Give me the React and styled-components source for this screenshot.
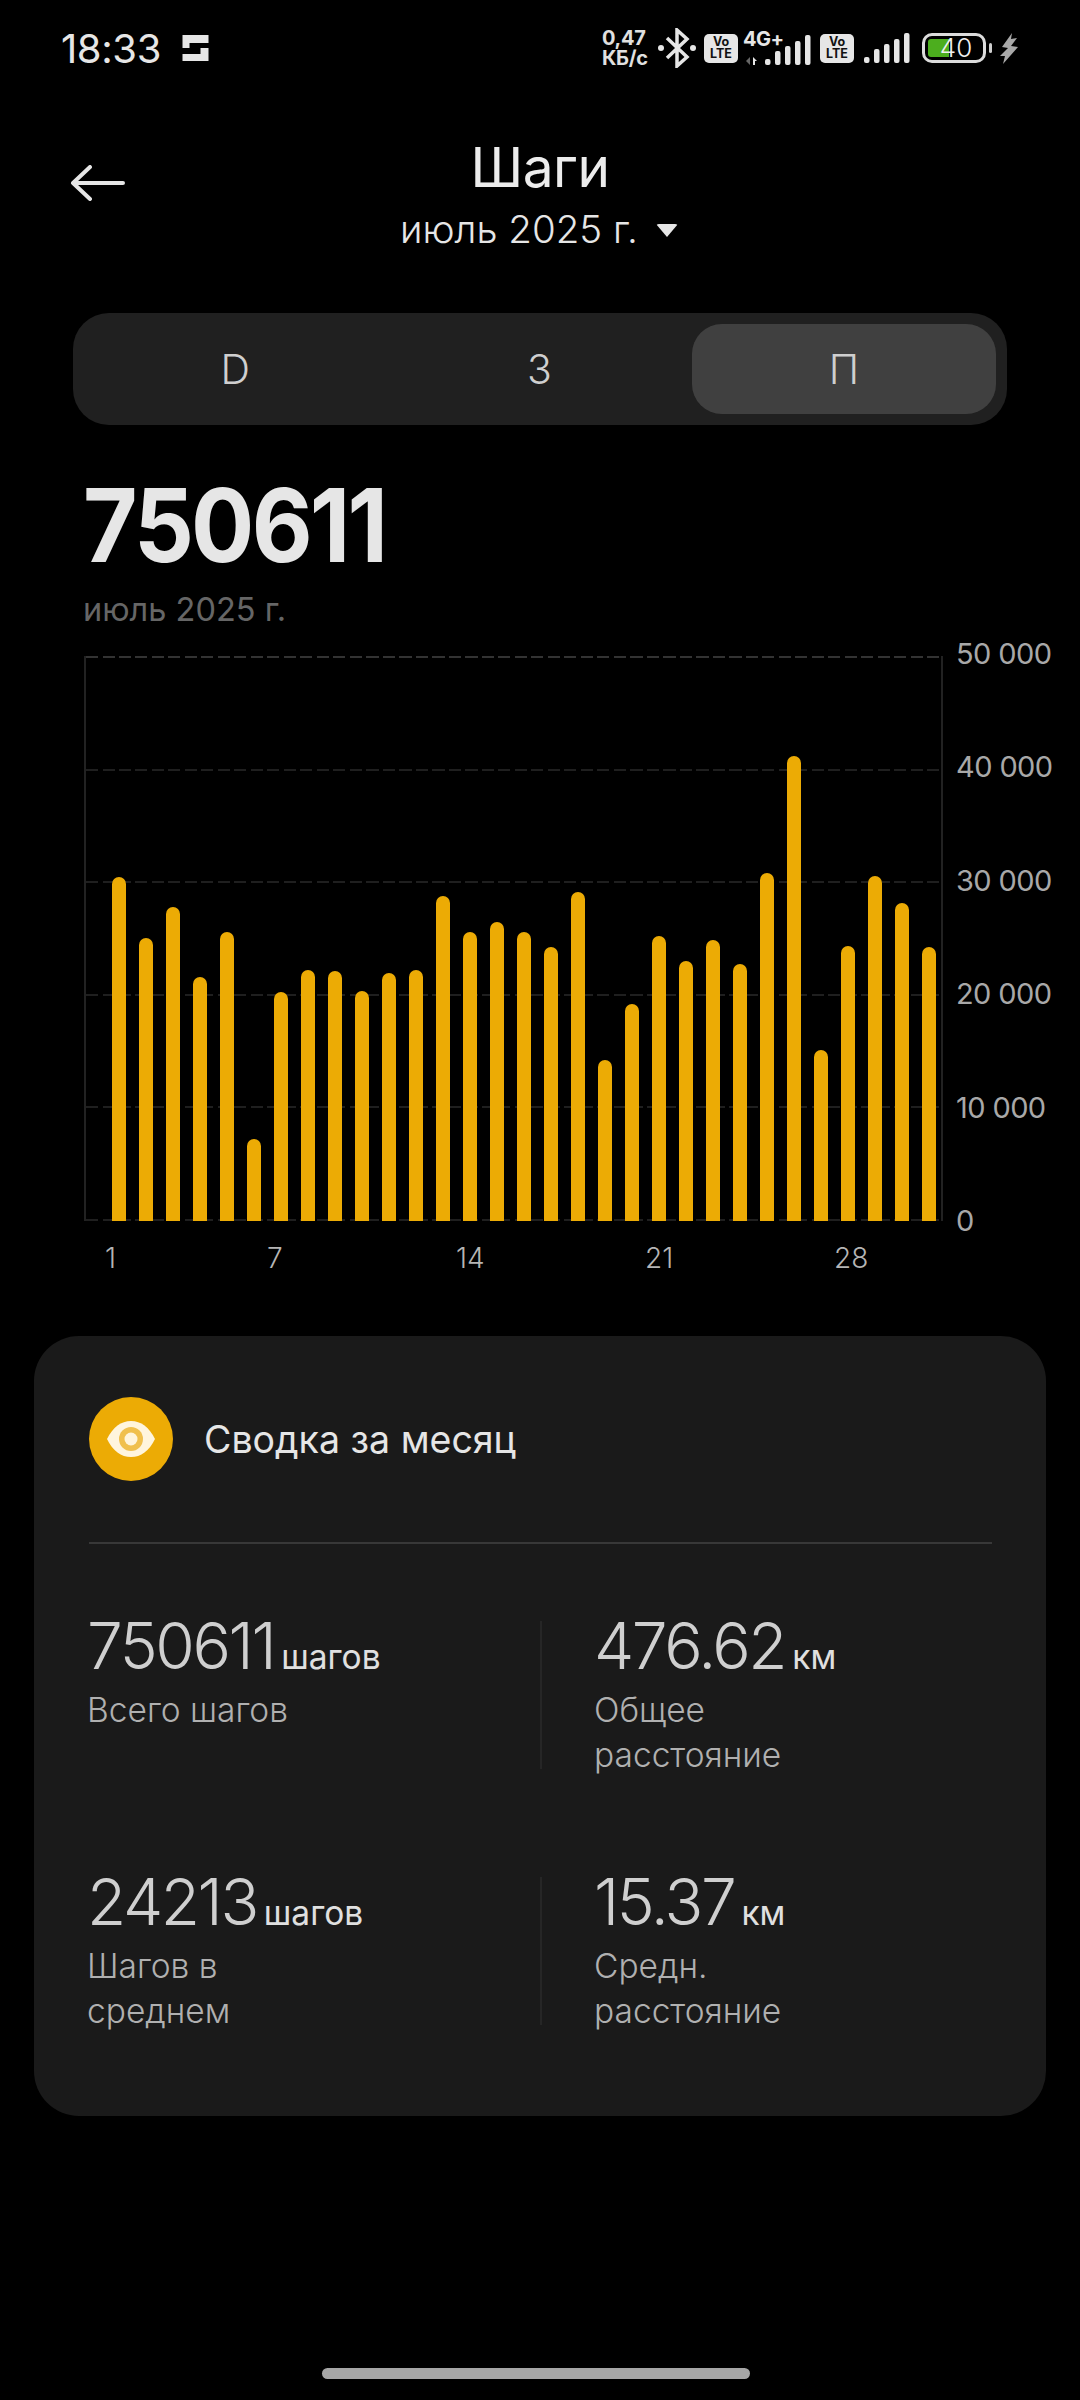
import styled, { createGlobalStyle } from 'styled-components';

const FONT = '"Inter", "Roboto", "Noto Sans", sans-serif';

// tops of the bars read off the chart, in px above the baseline
const BAR_HEIGHTS = [
  344, 283, 314, 244, 289, 82, 229, 251, 250, 230, 248, 251, 325, 289, 299, 289,
  274, 329, 161, 217, 285, 260, 281, 257, 348, 465, 171, 275, 345, 318, 274,
];
const Y_LABELS = ['50 000', '40 000', '30 000', '20 000', '10 000', '0'];
const X_LABELS = [1, 7, 14, 21, 28];

const GlobalStyle = createGlobalStyle`
  html, body {
    margin: 0;
    background: #000;
  }
  body {
    font-family: ${FONT};
    color: #e6e6e6;
  }
`;

const Page = styled.div`
  width: 1080px;
  height: 2400px;
  overflow: hidden;
  background: #000;
`;

/* status bar */
const StatusBar = styled.div`
  height: 96px;
  padding: 0 62px 0 61px;
  display: flex;
  align-items: center;
  justify-content: space-between;
`;

const StatusLeft = styled.div`
  display: flex;
  align-items: center;
  gap: 21px;
`;

const Clock = styled.span`
  font-size: 40px;
  font-weight: 400;
  letter-spacing: -0.4px;
  color: #e6e6e6;
`;

const StatusRight = styled.div`
  display: flex;
  align-items: center;
`;

const NetSpeed = styled.div`
  width: 50px;
  font-size: 20px;
  line-height: 20px;
  font-weight: 700;
  color: #e0e0e0;
  letter-spacing: -0.3px;
`;

const BluetoothIcon = styled.svg`
  margin-left: 6px;
`;

const VoLte = styled.div`
  width: 34px;
  height: 29px;
  border-radius: 5px;
  background: #e6e6e6;
  color: #111;
  font-size: 12.5px;
  line-height: 12.5px;
  font-weight: 700;
  text-align: center;
  padding-top: 2px;
  box-sizing: border-box;
  margin-left: ${(p) => p.$gap}px;
`;

const SignalWrap = styled.div`
  position: relative;
  width: 68px;
  height: 34px;
  margin-left: 5px;
  display: flex;
  justify-content: flex-end;
  align-items: flex-end;
`;

const SignalSolo = styled.div`
  margin-left: 10px;
  display: flex;
`;

const TrafficArrows = styled.svg`
  margin-right: 7px;
`;

const NetType = styled.span`
  position: absolute;
  left: 0;
  top: -2px;
  font-size: 20px;
  line-height: 20px;
  font-weight: 700;
  color: #e6e6e6;
  letter-spacing: -0.5px;
`;

const Battery = styled.div`
  position: relative;
  width: 64px;
  height: 30px;
  box-sizing: border-box;
  border: 3px solid #dcdcdc;
  border-radius: 10px;
  margin-left: 12px;
  display: flex;
  align-items: center;
  justify-content: center;

  &::after {
    content: '';
    position: absolute;
    right: -9px;
    top: 7px;
    width: 3px;
    height: 10px;
    border-radius: 2px;
    background: #cfcfcf;
  }
`;

const BatteryFill = styled.div`
  position: absolute;
  left: 3px;
  top: 3px;
  bottom: 3px;
  width: 21px;
  border-radius: 3px 0 0 3px;
  background: #4cae1e;
`;

const BatteryText = styled.span`
  position: relative;
  font-size: 26px;
  line-height: 24px;
  font-weight: 300;
  color: #f0f0f0;
  margin-left: 4px;
`;

const BoltIcon = styled.svg`
  margin-left: 14px;
`;

/* header */
const Header = styled.header`
  margin-top: 34px;
  position: relative;
  text-align: center;
`;

const BackButton = styled.button`
  position: absolute;
  left: 70px;
  top: 35px;
  padding: 0;
  border: 0;
  background: none;
  display: flex;
`;

const Title = styled.h1`
  margin: 0;
  font-size: 55px;
  line-height: 74px;
  font-weight: 400;
  letter-spacing: -0.5px;
  color: #ececec;
`;

const Subtitle = styled.div`
  display: flex;
  justify-content: center;
  align-items: center;
  gap: 18px;
  font-size: 38.5px;
  line-height: 50px;
  font-weight: 300;
  color: #e6e6e6;
  margin-left: -2px;
`;

const Caret = styled.span`
  width: 0;
  height: 0;
  margin-top: 2px;
  border-left: 11px solid transparent;
  border-right: 11px solid transparent;
  border-top: 13px solid #e6e6e6;
  border-radius: 3px;
`;

/* tabs */
const Tabs = styled.div`
  margin: 59px 0 0 73px;
  width: 934px;
  height: 112px;
  box-sizing: border-box;
  padding: 11px 11px 11px 10px;
  border-radius: 36px;
  background: #202020;
  display: grid;
  grid-template-columns: repeat(3, 1fr);
`;

const Tab = styled.div`
  display: flex;
  align-items: center;
  justify-content: center;
  border-radius: 30px;
  font-size: 41px;
  font-weight: 300;
  color: #cfcfcf;
  background: ${(p) => (p.$active ? '#404040' : 'transparent')};
`;

/* total */
const Hero = styled.section`
  margin: 50px 0 0 83px;
`;

// the reference digits are narrower than any installed face
const HeroValue = styled.div`
  font-size: 102px;
  line-height: 100px;
  font-weight: 700;
  letter-spacing: -3px;
  color: #e6e6e6;
  transform: scaleX(0.92);
  transform-origin: left center;
`;

const HeroDate = styled.div`
  margin-top: 10px;
  font-size: 32.5px;
  line-height: 50px;
  font-weight: 400;
  color: #666;
`;

/* chart */
const Chart = styled.section`
  margin: 21px 0 0 84px;
  display: flex;
`;

const Plot = styled.div`
  position: relative;
  width: 859px;
  height: 565px;
  box-sizing: border-box;
  border-left: 2px solid #222;
  border-right: 2px solid #222;
`;

const GridLines = styled.div`
  height: 100%;
  display: flex;
  flex-direction: column;
  justify-content: space-between;
`;

const GridLine = styled.div`
  height: 2px;
  background: repeating-linear-gradient(
    90deg,
    ${(p) => (p.$strong ? '#333' : '#1f1f1f')} 0 12px,
    transparent 12px 16.5px
  );
`;

const Bars = styled.div`
  position: absolute;
  inset: 0;
  padding-left: 26px;
  display: flex;
  align-items: flex-end;
  gap: 13px;
`;

const Bar = styled.div`
  width: 14px;
  border-radius: 7px 7px 0 0;
  background: #ecab05;
`;

const YAxis = styled.div`
  margin: -2px 0 0 13px;
  height: 569px;
  display: flex;
  flex-direction: column;
  justify-content: space-between;
`;

const YLabel = styled.div`
  height: 2px;
  line-height: 0;
  font-size: 29px;
  font-weight: 400;
  letter-spacing: -0.6px;
  white-space: nowrap;
  color: #a8a8a8;
`;

const XAxis = styled.div`
  margin: 15px 0 0 105px;
  display: grid;
  grid-template-columns: repeat(31, 27px);
  height: 40px;
`;

const XLabel = styled.div`
  grid-column: ${(p) => p.$day};
  font-size: 28px;
  line-height: 40px;
  font-weight: 300;
  white-space: nowrap;
  color: #b5b5b5;
`;

/* summary card */
const Card = styled.section`
  margin: 58px 0 0 34px;
  width: 1012px;
  height: 780px;
  box-sizing: border-box;
  padding: 61px 54px 0 55px;
  border-radius: 45px;
  background: #1a1a1a;
`;

const CardHeader = styled.div`
  height: 84px;
  display: flex;
  align-items: center;
  gap: 31px;
`;

const IconCircle = styled.div`
  width: 84px;
  height: 84px;
  border-radius: 50%;
  background: #ecab05;
  display: flex;
  align-items: center;
  justify-content: center;
`;

const CardTitle = styled.h2`
  margin: 0;
  font-size: 37.5px;
  font-weight: 400;
  color: #e6e6e6;
`;

const Divider = styled.div`
  margin-top: 61px;
  height: 2px;
  background: #383838;
`;

const StatGrid = styled.div`
  margin: 77px 0 0 -2px;
  display: grid;
  grid-template-columns: 453px 1fr;
  grid-auto-rows: 148px;
  row-gap: 108px;
`;

const StatCell = styled.div`
  height: 148px;
  ${(p) => p.$side && 'border-left: 2px solid #262626; padding-left: 52px;'}
`;

const StatValue = styled.div`
  display: flex;
  align-items: baseline;
  gap: 7px;
  height: 50px;
  line-height: 50px;
`;

const Number = styled.span`
  font-size: 64px;
  font-weight: 300;
  letter-spacing: -2.4px;
  color: #cfcfcf;
`;

const Unit = styled.span`
  font-size: 33.5px;
  font-weight: 400;
  color: #e0e0e0;
`;

const StatLabel = styled.div`
  margin-top: 17px;
  max-width: 240px;
  font-size: 33.5px;
  line-height: 45px;
  font-weight: 300;
  color: #b0b0b0;
`;

const HomeBar = styled.div`
  margin: 252px 0 0 322px;
  width: 428px;
  height: 11px;
  border-radius: 6px;
  background: #a6a6a6;
`;

const SignalBars = () => (
  <svg width="46" height="30" viewBox="0 0 46 30" fill="#e6e6e6">
    <rect x="0" y="24" width="5.5" height="6" rx="2" />
    <rect x="10" y="16" width="5.5" height="14" rx="2" />
    <rect x="20" y="11" width="5.5" height="19" rx="2" />
    <rect x="30" y="6" width="5.5" height="24" rx="2" />
    <rect x="40" y="0" width="5.5" height="30" rx="2" />
  </svg>
);

const Stat = ({ side, value, unit, label }) => (
  <StatCell $side={side}>
    <StatValue>
      <Number>{value}</Number>
      <Unit>{unit}</Unit>
    </StatValue>
    <StatLabel>{label}</StatLabel>
  </StatCell>
);

const App = () => {
  return (
    <>
      <GlobalStyle />
      <Page>
        <StatusBar>
          <StatusLeft>
            <Clock>18:33</Clock>
            <svg width="27" height="26" viewBox="0 0 26 26" fill="#e6e6e6">
              <path d="M0 0H26V8H7V13H0Z" />
              <path d="M0 19H18V13H26V26H0Z" />
            </svg>
          </StatusLeft>
          <StatusRight>
            <NetSpeed>
              0,47
              <br />
              КБ/с
            </NetSpeed>
            <BluetoothIcon
              width="38"
              height="40"
              viewBox="0 0 38 40"
              fill="none"
              stroke="#e6e6e6"
              strokeWidth="3.5"
            >
              <path d="M9 10L29 29L19 38V2L29 11L9 30" />
              <circle cx="3" cy="20" r="3" fill="#e6e6e6" stroke="none" />
              <circle cx="35" cy="20" r="3" fill="#e6e6e6" stroke="none" />
            </BluetoothIcon>
            <VoLte $gap={8}>
              Vo
              <br />
              LTE
            </VoLte>
            <SignalWrap>
              <NetType>4G+</NetType>
              <TrafficArrows width="12" height="9" viewBox="0 0 12 9">
                <path d="M0 5L4 1V9Z" fill="#666" />
                <path d="M7 1L11 5H7Z M7 5H9V9H7Z" fill="#e6e6e6" />
              </TrafficArrows>
              <SignalBars />
            </SignalWrap>
            <VoLte $gap={9}>
              Vo
              <br />
              LTE
            </VoLte>
            <SignalSolo>
              <SignalBars />
            </SignalSolo>
            <Battery>
              <BatteryFill />
              <BatteryText>40</BatteryText>
            </Battery>
            <BoltIcon width="18" height="31" viewBox="0 0 18 31" fill="#a8a8a8">
              <path d="M12 0L2 14L8 15L0 23H5L3 31L18 14L11 13L17 5L11 6Z" />
            </BoltIcon>
          </StatusRight>
        </StatusBar>

        <Header>
          <BackButton aria-label="back">
            <svg
              width="56"
              height="36"
              viewBox="0 0 56 36"
              fill="none"
              stroke="#e6e6e6"
              strokeWidth="4"
              strokeLinecap="round"
              strokeLinejoin="round"
            >
              <path d="M53 18H3M20 2L3 18L20 34" />
            </svg>
          </BackButton>
          <Title>Шаги</Title>
          <Subtitle>
            июль 2025 г.
            <Caret />
          </Subtitle>
        </Header>

        <Tabs>
          <Tab>D</Tab>
          <Tab>З</Tab>
          <Tab $active>П</Tab>
        </Tabs>

        <Hero>
          <HeroValue>750611</HeroValue>
          <HeroDate>июль 2025 г.</HeroDate>
        </Hero>

        <Chart>
          <Plot>
            <GridLines>
              {Y_LABELS.map((label, i) => (
                <GridLine key={label} $strong={i === 0} />
              ))}
            </GridLines>
            <Bars>
              {BAR_HEIGHTS.map((height, i) => (
                <Bar key={i} style={{ height }} />
              ))}
            </Bars>
          </Plot>
          <YAxis>
            {Y_LABELS.map((label) => (
              <YLabel key={label}>{label}</YLabel>
            ))}
          </YAxis>
        </Chart>
        <XAxis>
          {X_LABELS.map((day) => (
            <XLabel key={day} $day={day}>
              {day}
            </XLabel>
          ))}
        </XAxis>

        <Card>
          <CardHeader>
            <IconCircle>
              <svg width="48" height="36" viewBox="0 0 48 36">
                <path
                  d="M0 18C6 6 14 0 24 0S42 6 48 18C42 30 34 36 24 36S6 30 0 18Z"
                  fill="#fff5dd"
                />
                <circle cx="24" cy="18" r="12" fill="#f0c04e" />
                <circle cx="24" cy="18" r="6.5" fill="#fff5dd" />
              </svg>
            </IconCircle>
            <CardTitle>Сводка за месяц</CardTitle>
          </CardHeader>
          <Divider />
          <StatGrid>
            <Stat value="750611" unit="шагов" label="Всего шагов" />
            <Stat side value="476.62" unit="км" label="Общее расстояние" />
            <Stat value="24213" unit="шагов" label="Шагов в среднем" />
            <Stat side value="15.37" unit="км" label="Средн. расстояние" />
          </StatGrid>
        </Card>

        <HomeBar />
      </Page>
    </>
  );
};

export default App;
